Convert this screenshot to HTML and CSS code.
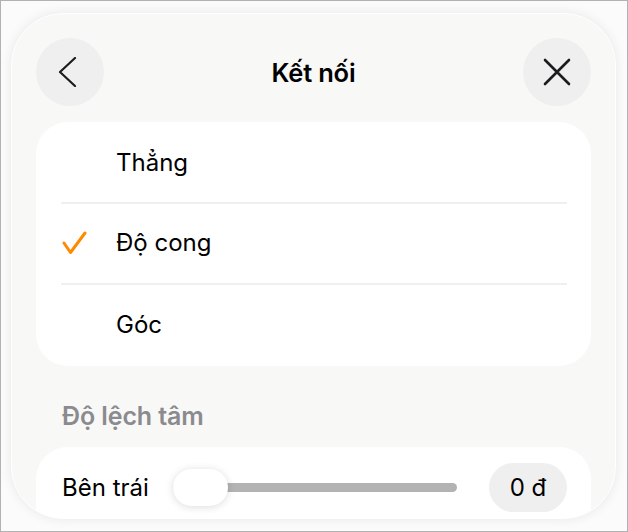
FILE: index.html
```html
<!DOCTYPE html>
<html lang="vi">
<head>
<meta charset="utf-8">
<title>Kết nối</title>
<link rel="stylesheet" href="styles.css">
</head>
<body>
<div class="frame">
  <div class="panel">
    <header class="topbar">
      <button class="round-btn" aria-label="Quay lại">
        <svg width="30" height="30" viewBox="0 0 30 30"><path d="M20 1 L5 15 L20 29" fill="none" stroke="#1c1c1e" stroke-width="2.2" stroke-linecap="round" stroke-linejoin="round"/></svg>
      </button>
      <h1 class="title">Kết nối</h1>
      <button class="round-btn" aria-label="Đóng">
        <svg width="28" height="28" viewBox="0 0 28 28"><path d="M2 2 L26 26 M26 2 L2 26" fill="none" stroke="#1c1c1e" stroke-width="2.6" stroke-linecap="round"/></svg>
      </button>
    </header>

    <ul class="card options">
      <li class="option"><span class="check"></span><span class="label">Thẳng</span></li>
      <li class="option selected"><span class="check"><svg width="26" height="24" viewBox="0 0 26 24"><path d="M2 12 L8.5 21.5 L23 2" fill="none" stroke="#ff8a00" stroke-width="3" stroke-linecap="round" stroke-linejoin="round"/></svg></span><span class="label">Độ cong</span></li>
      <li class="option"><span class="check"></span><span class="label">Góc</span></li>
    </ul>

    <h2 class="section-title">Độ lệch tâm</h2>

    <div class="card slider-card">
      <span class="slider-label">Bên trái</span>
      <div class="slider">
        <div class="track"></div>
        <div class="knob"></div>
      </div>
      <span class="value-pill">0 đ</span>
    </div>
  </div>
</div>
</body>
</html>
```

FILE: styles.css
```css
* { box-sizing: border-box; }
html, body { margin: 0; padding: 0; }
body {
  width: 628px;
  height: 532px;
  font-family: Inter, "Liberation Sans", sans-serif;
  color: #000;
  background: #fff;
}
.frame {
  width: 628px;
  height: 532px;
  border: 1px solid #b2b2b2;
  background: #fbfbfb;
  padding: 12px 11px 11px 10px;
  overflow: hidden;
}
.panel {
  height: 506px;
  background: #f8f8f7;
  border-radius: 52px;
  border: 1px solid #ffffff;
  box-shadow: 0 0 12px rgba(0,0,0,0.08);
  padding: 24px 24px 0 24px;
  overflow: hidden;
}
.topbar {
  display: flex;
  align-items: center;
  justify-content: space-between;
  height: 68px;
}
.round-btn {
  width: 68px;
  height: 68px;
  border-radius: 50%;
  border: 0;
  background: #efefef;
  display: flex;
  align-items: center;
  justify-content: center;
  padding: 0;
}
.title {
  margin: 0;
  font-size: 25.5px;
  font-weight: 600;
  letter-spacing: -0.2px;
}
.card {
  background: #fff;
  border-radius: 32px;
}
.options {
  list-style: none;
  margin: 16px 0 0 0;
  padding: 0;
}
.option {
  display: flex;
  align-items: center;
  height: 81px;
  padding-left: 26px;
  position: relative;
  font-size: 24px;
}
.option:first-child { height: 80px; }
.option:last-child { height: 83px; }
.option + .option::before {
  content: "";
  position: absolute;
  top: 0;
  left: 25px;
  right: 24px;
  height: 2px;
  background: #efefef;
}
.check {
  width: 54px;
  display: flex;
  align-items: center;
}
.section-title {
  margin: 35px 0 0 26px;
  font-size: 25px;
  font-weight: 600;
  color: #8b8b8f;
  line-height: 30px;
  letter-spacing: -0.1px;
}
.slider-card {
  margin-top: 16px;
  height: 100px;
  display: flex;
  align-items: flex-start;
  padding: 16px 24px 0 26px;
}
.slider-label {
  font-size: 24px;
  line-height: 49px;
  width: 111px;
}
.slider {
  position: relative;
  width: 284px;
  height: 49px;
  display: flex;
  align-items: center;
}
.track {
  width: 100%;
  height: 9px;
  border-radius: 5px;
  background: #b3b3b3;
}
.knob {
  position: absolute;
  left: 0;
  top: 6px;
  width: 55px;
  height: 37px;
  border-radius: 19px;
  background: #fff;
  box-shadow: 0 1px 8px rgba(0,0,0,0.14);
}
.value-pill {
  margin-left: auto;
  width: 78px;
  height: 49px;
  border-radius: 25px;
  background: #efeff0;
  font-size: 24px;
  display: flex;
  align-items: center;
  justify-content: center;
}
```
